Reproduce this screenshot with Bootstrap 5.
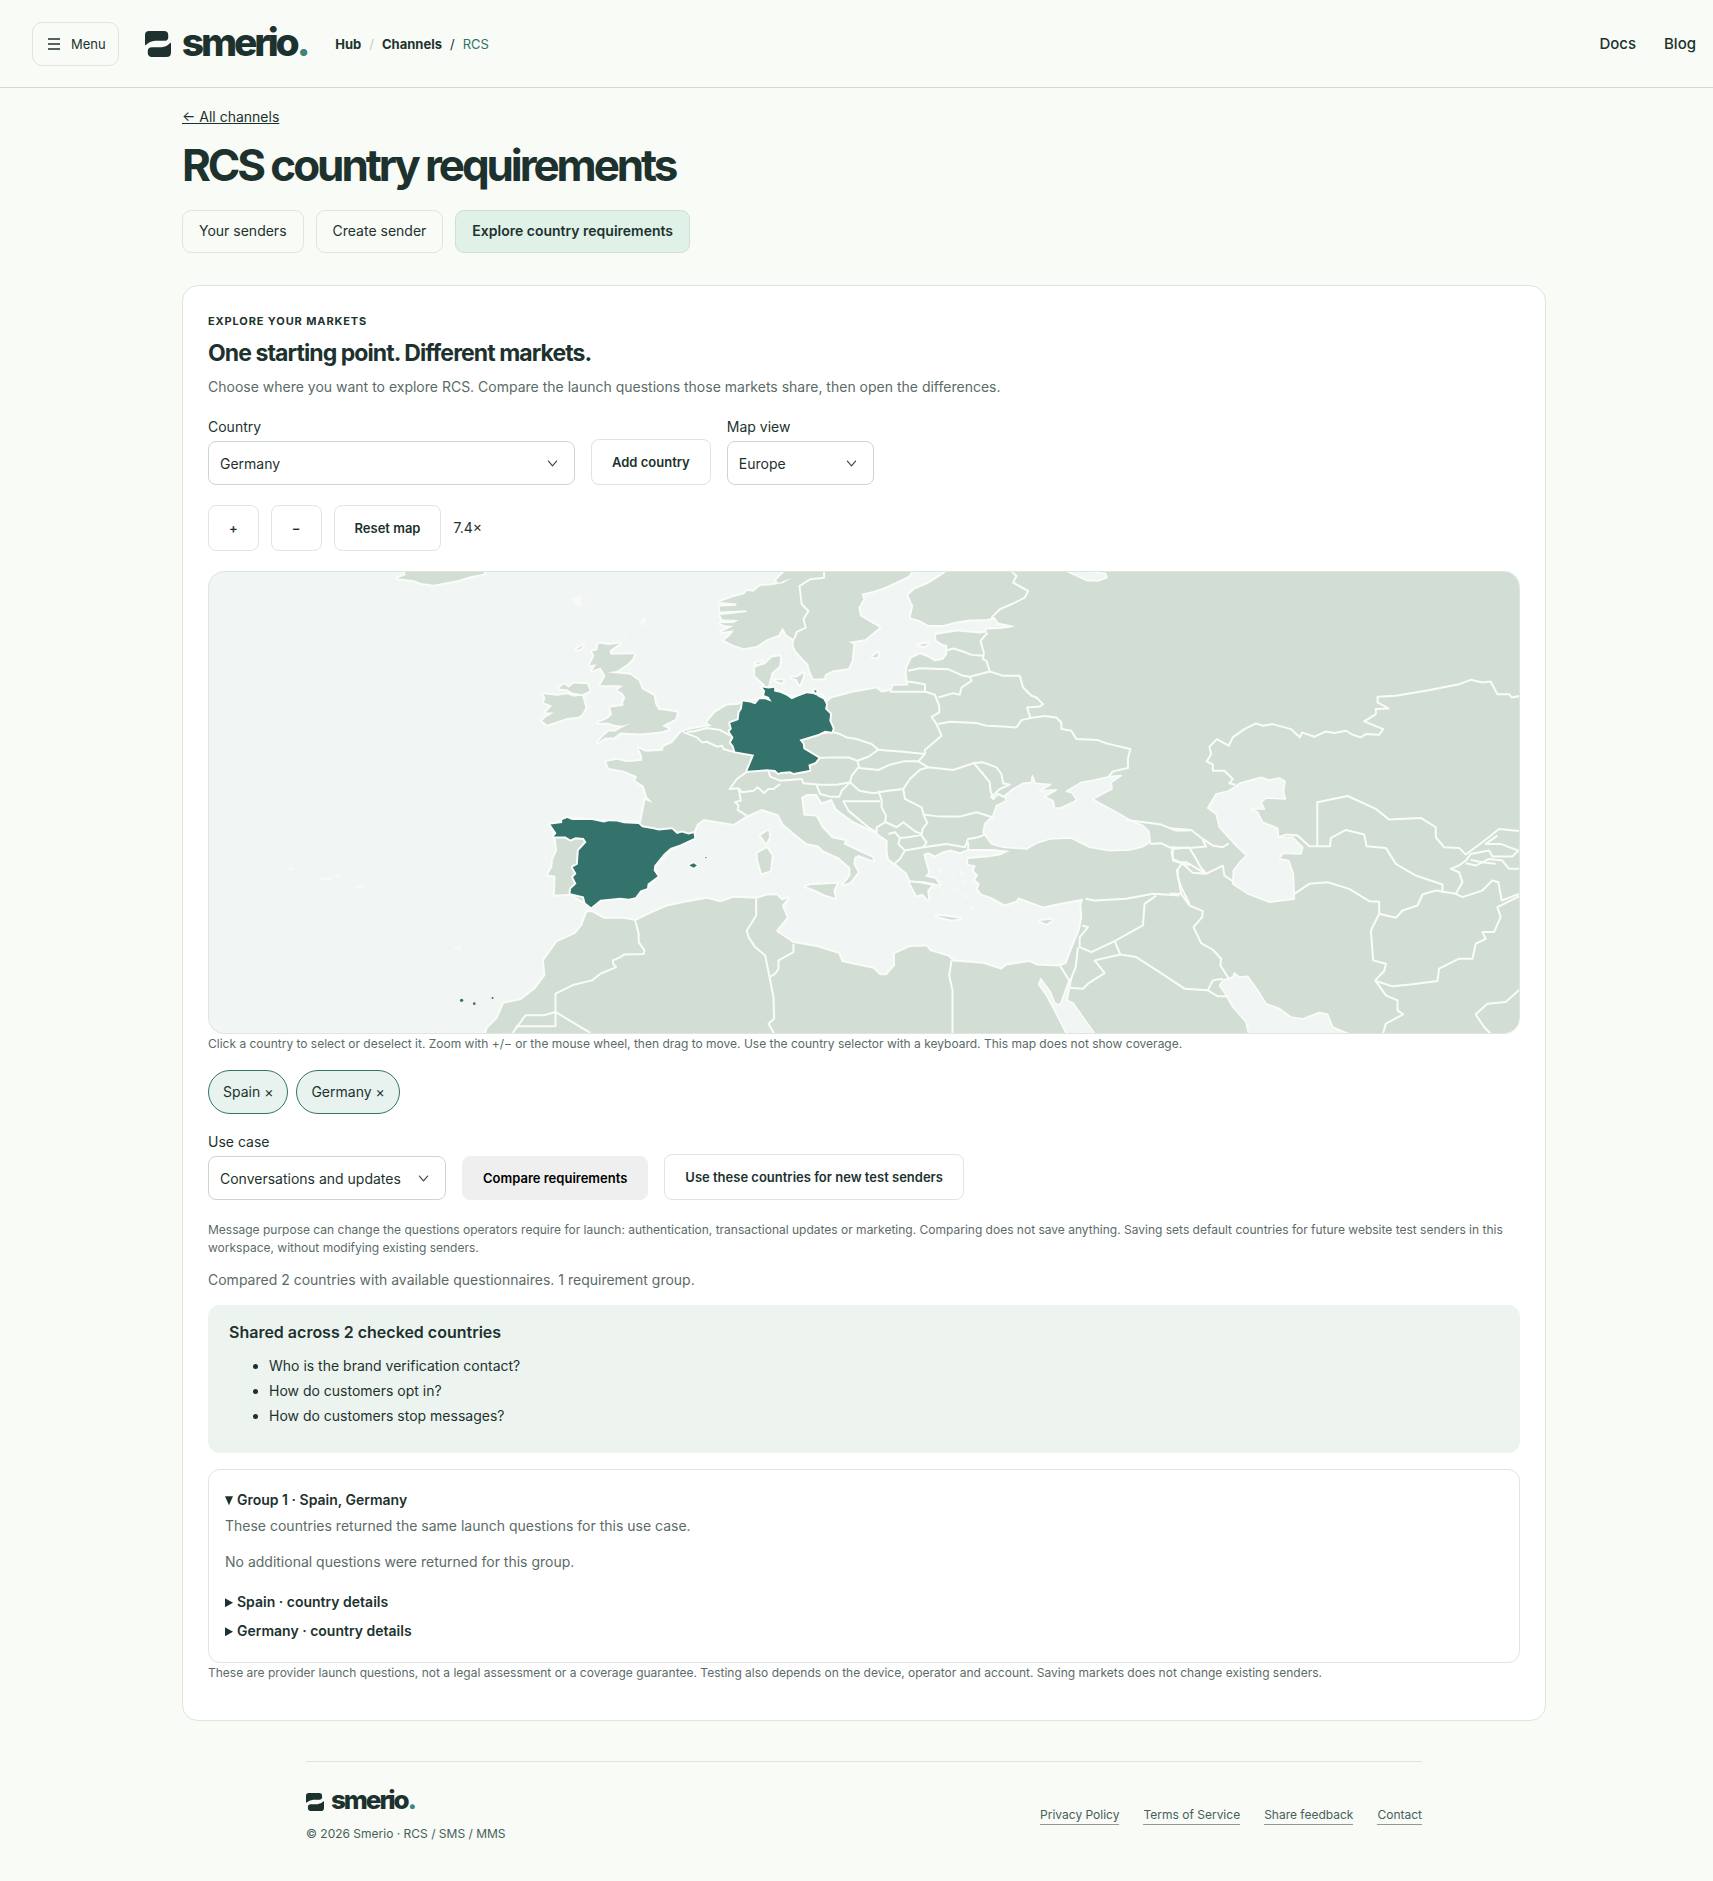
<!DOCTYPE html>
<html lang="en">
<head>
<meta charset="utf-8">
<meta name="viewport" content="width=device-width, initial-scale=1">
<title>RCS country requirements · Smerio</title>
<link href="https://cdn.jsdelivr.net/npm/bootstrap@5.3.0/dist/css/bootstrap.min.css" rel="stylesheet">
<style>
:root{--ink:#1d322e;--muted-ink:#5c6b67;--line:#dfe5df;--accent:#33736b;--paper:#f8fbf6}
body{font-family:Inter,"Liberation Sans",sans-serif;font-size:14px;line-height:20px;color:var(--ink);background:var(--paper)}
a{color:inherit}
.topbar{height:88px;border-bottom:1px solid #d3d9d3;padding:0 17px 0 32px}
.btn{font-size:14px;line-height:20px;color:var(--ink);border:1px solid var(--line);border-radius:8px}
.menu-btn{height:44px;padding:0 12px 0 15px;font-size:13px;border-radius:10px;gap:11px}
.brand{font-weight:800;letter-spacing:-.08em;text-decoration:none;line-height:1;color:var(--ink)}
.brand-lg{font-size:39px;gap:11px;margin-left:26px}
.brand-sm{font-size:26px;gap:7px}
.brand i{font-style:normal;color:#3f8478}
.crumbs{font-size:13px;gap:8px;margin-left:28px}
.crumbs a{font-weight:700;text-decoration:none}
.crumb-now{color:var(--accent)}
.top-links{gap:28px;font-size:15px;font-weight:500}
.gutter-start{padding-left:15px}
.page-col{max-width:1364px;margin:0 auto}
.back-link{margin-top:19px}
h1{font-size:44px;line-height:52px;font-weight:700;letter-spacing:-.07em;margin:12px 0 19px}
.tab-row{gap:12px}
.tab-btn{height:43px;padding:10px 16px;border-radius:9px}
.btn.tab-btn.active{background:#e0f1e8;color:var(--ink);border-color:#cddfd6;font-weight:600}
.panel{background:#fff;border:1px solid var(--line);border-radius:16px;padding:25px 25px 37px;margin-top:32px}
.eyebrow{font-size:11px;line-height:20px;font-weight:700;letter-spacing:.08em}
h2{font-size:23px;line-height:30px;font-weight:700;letter-spacing:-.04em;margin:7px 0 9px}
.intro{margin-bottom:19px}
.soft{color:var(--muted-ink)}
.fine{font-size:12px;line-height:20px;color:var(--muted-ink)}
.fine-wrap{line-height:18px;margin:21px 0 13px}
.form-select{height:44px;font-size:14px;color:var(--ink);border-color:#cbd6d0;border-radius:8px;padding:0 36px 0 11px;background-size:13px 13px;background-position:right 15px center;background-image:url("data:image/svg+xml,%3csvg xmlns='http://www.w3.org/2000/svg' viewBox='0 0 16 16'%3e%3cpath fill='none' stroke='%233d4f4b' stroke-width='1.5' stroke-linecap='round' stroke-linejoin='round' d='m3 5 5 6 5-6'/%3e%3c/svg%3e")}
.form-label{margin:0 0 3px;line-height:22px}
.sel-country{width:367px}.sel-view{width:147px}.sel-case{width:238px}
.act{height:46px;padding:0 20px;font-size:13px;font-weight:600;background:#fff}
.act-plain{height:44px;background:#efefef;border-color:#efefef;color:#000}
.zoom-row{gap:12px;margin:20px 0}
.world{display:block;width:100%;height:auto;border:1px solid var(--line);border-radius:16px;background:#f1f5f4}
.chip{height:44px;padding:0 14px;border-radius:22px;background:#e8f2ee;border-color:var(--accent)}
.case-row{margin-top:17px}
.status-line{margin-bottom:15px}
.shared{background:#edf4f0;border-radius:12px;padding:16px 21px 25px}
.shared ul{padding-left:40px}
h3{font-size:16px;line-height:22px;font-weight:600;margin:0 0 10px}
.shared li{line-height:25px}
.group-box{border:1px solid var(--line);border-radius:12px;padding:20px 16px 12px}
summary{font-weight:600;line-height:20px;list-style:none}
summary::before{content:"";display:inline-block;width:8px;height:9px;margin-right:4px;background:currentColor;clip-path:polygon(0 0,100% 50%,0 100%)}
.group-box[open]>summary::before{clip-path:polygon(0 0,100% 0,50% 100%)}
.group-text{margin:6px 0 16px}
.group-text+.nested{margin-top:20px}
.nested{padding:0 0 9px}
.foot{max-width:1116px;margin:40px auto 0;border-top:1px solid #dde3dd;padding:25px 0 37px;font-size:12px;line-height:18px;color:#47605a}
.foot-links{gap:24px}
.foot-links a{text-decoration:none;border-bottom:1px solid #8d9c96}
</style>
</head>
<body>
<svg class="d-none"><symbol id="mark-s" viewBox="0 0 75 75"><path d="M12 0H55Q67 0 67 12V19Q67 28 58 28H30Q13 29 2 41Q0 41 0 38V12Q0 0 12 0Z"/><path d="M75 35V62Q75 75 62 75H20Q8 75 8 63V58Q8 47 20 47H48Q63 46 73 34Z"/></symbol></svg>
<header class="topbar d-flex align-items-center justify-content-between">
  <div class="d-flex align-items-center">
    <button type="button" class="btn menu-btn d-flex align-items-center"><svg width="12" height="12" viewBox="0 0 12 12" stroke="currentColor" stroke-width="1.4" aria-hidden="true"><path d="M0 1H12M0 6H12M0 11H12"/></svg>Menu</button>
    <a href="#" class="brand brand-lg d-flex align-items-center"><svg width="26" height="26" fill="currentColor" aria-hidden="true"><use href="#mark-s"/></svg><span class="pb-1">smerio<i>.</i></span></a>
    <nav class="crumbs d-flex align-items-center" aria-label="Breadcrumb"><a href="#">Hub</a><span class="opacity-25">/</span><a href="#">Channels</a><span>/</span><span class="crumb-now">RCS</span></nav>
  </div>
  <nav class="top-links d-flex"><a class="text-decoration-none" href="#">Docs</a><a class="text-decoration-none" href="#">Blog</a></nav>
</header>

<div class="gutter-start">
<main class="page-col">
  <a href="#" class="back-link d-inline-block">← All channels</a>
  <h1>RCS country requirements</h1>
  <nav class="tab-row d-flex flex-wrap"><a href="#" class="btn tab-btn">Your senders</a><a href="#" class="btn tab-btn">Create sender</a><a href="#" class="btn tab-btn active" aria-current="page">Explore country requirements</a></nav>

  <section class="panel">
    <div class="eyebrow">EXPLORE YOUR MARKETS</div>
    <h2>One starting point. Different markets.</h2>
    <p class="soft intro">Choose where you want to explore RCS. Compare the launch questions those markets share, then open the differences.</p>
    <div class="d-flex flex-wrap align-items-end gap-3">
      <div><label class="form-label d-block" for="country">Country</label><select id="country" class="form-select sel-country"><option>Germany</option><option>Spain</option></select></div>
      <button type="button" class="btn act">Add country</button>
      <div><label class="form-label d-block" for="view">Map view</label><select id="view" class="form-select sel-view"><option>Europe</option><option>World</option></select></div>
    </div>
    <div class="zoom-row d-flex align-items-center"><button type="button" class="btn act">+</button><button type="button" class="btn act">−</button><button type="button" class="btn act">Reset map</button><span>7.4×</span></div>

    <svg class="world" viewBox="-936 33 3936 1386" role="img" aria-label="Map of Europe with Spain and Germany selected">
      <g fill="#d2ddd4" stroke="#fafcf9" stroke-width="12" stroke-linejoin="round" paint-order="stroke">
        <!-- Scandinavia -->
        <path d="M800 25L768 58L775 66L815 50L790 66L755 73L720 75L700 92L680 90L672 100L640 108L598 123L650 128L645 135L598 137L600 152L680 148L678 154L600 162L606 176L655 177L640 186L600 187L612 193L640 195L602 214L641 208L630 224L612 238L640 252L670 262L710 255L740 235L775 222L787 200L800 222L822 235L820 255L828 270L845 290L865 310L868 325L880 354L912 352L915 340L940 328L985 322L995 300L1000 250L985 243L1035 235L1078 200L1050 183L1020 165L1015 140L1030 115L1025 98L1060 90L1090 80L1130 62L1165 45L1180 25Z"/>
        <!-- Eurasia and Africa -->
        <path d="M1290 25L1262 45L1225 68L1185 85L1165 103L1180 135L1172 170L1200 178L1225 192L1270 192L1310 182L1350 176L1400 175L1425 168L1435 185L1485 195L1475 200L1440 204L1400 206L1400 215L1380 218L1315 212L1270 218L1248 222L1250 238L1270 250L1282 252L1282 280L1270 297L1245 302L1225 290L1200 280L1175 292L1162 320L1160 340L1166 374L1120 375L1115 390L1085 395L1068 383L1000 395L935 412L918 428L905 405L870 397L820 412L760 385L735 380L734 372L705 345L705 320L735 310L755 290L780 286L778 315L755 335L745 372L740 420L700 420L668 424L655 432L620 434L585 455L560 485L575 495L500 508L480 517L470 530L455 547L430 558L428 570L375 573L355 563L365 585L365 600L335 603L315 603L290 597L258 603L265 622L310 630L350 647L345 660L370 675L380 708L397 727L375 718L362 785L270 784L140 774L95 795L105 830L110 870L98 895L95 920L82 943L105 946L103 1003L150 1000L210 1035L250 1012L340 1010L380 980L408 945L400 920L450 865L520 832L520 815L530 790L550 775L640 790L680 765L725 745L775 762L790 790L830 825L860 848L895 855L910 870L955 890L990 920L992 945L970 972L990 965L1013 935L1000 910L1003 890L1015 883L1060 900L1055 890L1015 872L970 850L975 841L935 832L905 800L888 768L850 765L843 710L860 700L890 700L905 725L935 715L950 745L1000 782L1060 810L1103 840L1103 875L1107 895L1130 912L1160 937L1172 962L1212 962L1258 972L1245 955L1215 948L1225 935L1215 900L1210 880L1225 875L1245 885L1270 872L1292 867L1320 875L1345 865L1380 865L1420 865L1470 871L1440 885L1405 890L1345 895L1345 910L1368 915L1362 930L1375 945L1366 958L1380 970L1374 985L1385 1000L1415 1010L1455 1032L1490 1020L1495 1010L1570 1038L1630 1025L1690 1015L1685 1035L1688 1070L1680 1110L1655 1170L1640 1210L1620 1218L1550 1215L1530 1205L1460 1215L1445 1228L1390 1210L1300 1203L1285 1188L1230 1172L1220 1158L1170 1160L1125 1180L1125 1215L1100 1245L1080 1245L1060 1225L965 1205L955 1180L890 1160L820 1148L770 1115L768 1110L800 1070L785 1035L802 1013L785 1020L770 1004L740 1005L710 1015L640 1012L600 1025L560 1015L500 1025L440 1038L400 1055L345 1082L310 1075L250 1075L215 1055L200 1055L185 1095L165 1120L110 1145L70 1200L75 1245L45 1285L0 1320L-50 1330L-70 1375L-100 1405L-110 1450H3050V25Z"/>
        <path d="M1170 965L1190 1005L1208 1000L1225 1018L1222 990L1235 975L1200 968Z"/>
        <!-- British Isles -->
        <path d="M235 248L265 252L298 248L280 260L268 268L270 282L342 280L335 295L320 310L290 330L262 335L330 342L355 360L365 385L400 405L405 430L415 448L440 450L470 455L465 475L425 495L445 505L425 512L360 518L300 515L280 530L255 530L232 545L250 525L265 512L285 512L305 500L330 488L305 495L280 492L262 485L232 487L260 475L275 462L270 440L310 435L308 425L315 410L305 395L290 388L308 375L290 373L240 373L255 345L240 320L215 330L228 310L208 313L222 285L215 272L230 268Z"/>
        <path d="M68 400L110 405L140 400L160 408L185 404L195 440L185 460L175 468L140 472L100 485L80 492L65 480L75 470L100 455L75 455L95 435L70 425L75 412Z"/>
        <path d="M115 383L130 370L145 380L160 368L200 370L208 390L185 400L155 395L140 385Z"/>
        <path d="M-350 25L-345 42L-370 52L-320 58L-300 66L-260 71L-190 58L-150 46L-110 38V25Z"/>
        <!-- islands -->
        <path d="M858 978L870 974L950 970L940 990L945 1012L915 1003L885 988Z"/><path d="M712 878L740 863L755 885L750 930L725 938L714 900Z"/><path d="M722 825L745 810L747 830L738 847Z"/>
        <path d="M765 358L790 358L785 366Z"/><path d="M812 350L830 350L850 337L848 350L838 372L830 355Z"/><path d="M705 308L725 302L715 309Z"/><path d="M1058 288L1075 275L1072 290Z"/><path d="M1195 252L1225 248L1215 255Z"/><path d="M168 266L188 252L180 264Z"/>
        <path d="M1250 1066L1275 1068L1320 1074L1295 1078L1270 1072Z"/><path d="M1560 1082L1598 1078L1580 1090Z"/>
      </g>
      <!-- inland seas and gulfs -->
      <g fill="#f1f5f4" stroke="#fafcf9" stroke-width="5" stroke-linejoin="round">
        <path transform="translate(1020 660)" d="M370 155L375 130L400 105L410 75L440 60L435 45L460 25L490 8L515 5L518-15L527 8L572 12L540 30L590 28L555 48L580 60L585 82L602 82L640 65L652 58L635 35L620 32L665 5L705-2L750-12L785-15L755 5L757 25L728 40L700 55L715 65L780 100L810 118L850 135L868 152L872 185L850 198L810 208L750 210L690 200L660 185L635 172L570 175L530 188L500 205L430 200L395 190Z"/>
        <path transform="translate(1950 0)" d="M195 680L210 668L275 650L300 658L330 652L347 662L342 692L348 715L290 712L275 725L285 745L245 745L265 755L280 785L325 803L328 830L370 830L385 845L400 860L395 880L340 878L330 895L358 900L372 940L375 1015L300 1025L235 1000L190 970L192 930L215 900L232 885L200 855L150 800L140 760L115 742L140 700L175 692Z"/>
        <path transform="translate(1950 0)" d="M160 1260L190 1250L195 1238L210 1250L235 1248L265 1290L290 1330L330 1345L365 1370L400 1376L450 1357L475 1362L490 1400L560 1430H240L230 1385L190 1340L170 1305L150 1275Z"/>
        <path transform="translate(1020 660)" d="M543 595L537 612L560 645L582 685L625 770H712L640 668L622 660L634 600L628 600L606 662L600 674L585 668L572 635Z"/>
        <path d="M1640 30L1700 58L1735 60L1762 50L1758 38L1700 30Z"/>
      </g>
      <!-- borders -->
      <g fill="none" stroke="#fafcf9" stroke-width="6" stroke-linejoin="round">
        <path d="M912 30V50L870 55L838 75L845 130L865 150L850 175L857 200L830 213L822 235M1475 30L1490 45L1480 65L1525 90L1515 110L1475 130L1440 145L1415 170M1403 215L1382 240L1392 275L1390 295L1400 300L1410 332L1450 345L1500 345L1510 380L1535 405L1550 410L1570 430L1560 437L1522 440L1532 472M1282 268L1300 263L1330 272L1355 282L1390 285M1165 330L1200 322L1285 325L1330 345L1350 348L1410 332M1350 348L1355 360L1325 380L1320 402L1300 397L1255 410M1165 362L1215 370L1215 390M1110 393L1215 392L1245 402L1258 435L1258 455L1235 468L1250 490L1265 525L1215 568L1215 580L1195 602M1255 490L1290 483L1370 487L1400 495L1450 497L1490 500L1505 478L1532 472L1575 466L1610 470L1625 485V505L1655 510L1670 535L1735 538L1760 548L1832 565L1825 595L1825 622L1780 632L1765 650"/>
        <path d="M895 520L935 513L960 520L980 530L1010 535L1055 550L1075 567L1110 570L1150 573L1215 580M895 592L930 590L985 590L1012 600L1045 588L1075 567M1012 600L1018 622L1075 628L1110 612L1150 602L1195 602L1225 620M1015 620L995 645L990 665L950 672L900 672L850 668L845 655L780 660L750 648L745 630M682 632L650 655L628 685L655 683L665 695L700 690L712 680L732 697L745 685L760 685L780 670M655 683L662 720L645 725L655 735L652 748L680 765M1018 690L990 665M1018 690L1060 698L1105 690L1150 685L1170 655L1200 627L1225 620L1300 628L1362 607L1390 640L1410 665L1412 690L1420 715L1435 700L1460 712M1362 607L1390 605L1430 620L1445 640L1450 668L1470 672L1440 685L1412 712M890 675L900 700L930 708L958 708L965 690L990 665M1080 722L970 722L985 750L1045 800L1070 815L1070 800L1095 785L1098 765L1085 740L1085 718L1075 690M1150 685L1155 715L1205 740L1212 765L1222 787L1208 805L1205 825L1220 845L1210 860L1155 870L1135 850L1140 832L1125 815L1105 820M1098 785L1130 800L1150 785L1185 812L1208 822M1140 832L1165 830L1208 822M1155 870L1140 895L1125 908M1210 860L1280 850L1335 860L1345 835L1375 830L1395 822M1345 845V870M1212 762L1260 768L1320 768L1370 755L1425 772M490 515L530 530L545 545L560 543L590 558L605 555L610 565L645 575M500 512L520 512L560 502L600 508L630 525"/>
        <path d="M345 1082L355 1120V1145L372 1170L370 1181L312 1182L300 1190L278 1200V1210L287 1220L240 1240L215 1260L160 1273L105 1300V1398H-15M210 1418L105 1355L70 1365L15 1365L-25 1420M708 1015V1065L680 1110L685 1130L705 1160L735 1185L748 1250L760 1310L762 1375L745 1390L765 1425M820 1150V1175L775 1200V1225L765 1240L748 1250M1295 1200L1288 1245L1298 1290V1425"/>
        <path transform="translate(1020 660)" d="M872 190L905 188L940 205L990 200M940 205L940 240L990 255M955 265L955 290L965 320L990 370M678 355L705 360L800 355L880 340L960 345M890 345L855 370L850 435L765 482L695 515L660 500L660 470L685 440L668 435M765 482L782 522L705 540L735 578L685 610L670 625L632 622M655 500L648 560L630 605M602 558L632 605M782 522L830 530L900 575L975 625M800 118L835 123L905 132L950 150H990"/>
        <path transform="translate(1950 0)" d="M45 1285L115 1290L130 1260L160 1255M115 1290L145 1308H175M0 803L65 808L100 835L130 855L160 860L178 848M5 860L60 862L110 858L100 840M60 862L80 895L90 915L110 940L50 905L35 905L70 937L110 940L160 915L165 945L190 962M5 870L10 895L38 908L22 930L35 1000L60 1035L100 1052L98 1070L72 1100L95 1148L130 1168L155 1195L153 1215L178 1255M0 1000H35"/>
        <path transform="translate(1950 0)" d="M198 672L180 668L190 655L165 630H130L130 612L112 602L125 580L120 558L142 535L178 555L190 530L225 505L260 488L280 495L310 490L365 505L392 530L398 515L435 528L470 512L495 517L530 510L550 522L575 530L590 520L630 522L642 505L585 482L620 460V445L658 443L625 425V408L680 405L770 390L870 370L905 357L940 365L965 362L985 400L1020 400L1028 410L1055 405"/>
        <path transform="translate(1950 0)" d="M444 856V725L535 706L620 745L660 777L755 772L800 800V830L825 860L870 862L890 882L940 845L990 805L1055 812M328 830L350 822L385 825L420 857H482L485 832L530 808L585 822L592 857L650 862L680 910L740 945L820 972V998M375 1000L420 970L475 965L540 985L600 1022L630 1024V1060L680 1072L700 1050L745 1035L760 1002L800 990L860 1000L880 965L870 935L845 925L870 915L890 900L905 880L960 870L970 888L1030 888L1048 870L995 850L950 850L985 825M890 908L920 915L960 895L1000 900L1020 925H1055M905 898L940 905L980 910M860 1000L880 1010L940 990L970 960L988 965L998 1020L1050 1000M1055 1005L985 1040L995 1070L975 1115H940L950 1135L920 1150L910 1195L870 1195L810 1225L805 1262L730 1272L670 1278L620 1262M630 1060L605 1110L612 1200L650 1210L645 1232L618 1260L650 1305L685 1320V1350L702 1362L650 1390L640 1425M1055 1285L1010 1325L955 1330L920 1362L945 1400L970 1425"/>
      </g>
      <!-- selected countries -->
      <g fill="#33736b" stroke="#fafcf9" stroke-width="12" stroke-linejoin="round" paint-order="stroke">
        <path d="M90 792L125 787L125 778L140 772L155 778H215L250 786L265 782L290 783L310 788L355 790L365 800L400 806L415 810L455 806L470 820L485 816L505 822L520 818L522 832L480 852L450 862L430 880L402 915L400 930L412 947L382 970L380 983L360 990L345 1010L325 1015L300 1012L240 1018L212 1040L195 1027L190 1008L150 998L152 985L168 970L158 950L168 940L157 920L172 912L175 870L198 845L190 832L165 830L150 837L135 828L100 828L108 818Z"/>
        <path d="M727 380L745 383L762 381V392L780 396L800 405L815 415L832 408L860 397L885 400L895 408L910 415L918 430L915 445L930 460L928 480L938 503L935 513L915 510L895 520L838 537L848 550L850 565L895 592L885 605L865 612L868 628L820 637L810 632L782 634L775 637L765 628L740 626L715 628L682 630L702 582L645 572L640 555L632 545L640 530L628 512L635 505L630 487L655 478L658 455L665 445L668 422L690 425L705 430L718 415L735 415L755 423L745 408L732 403L735 390Z"/>
        <path d="M507 914L520 908L530 915L520 922Z"/><path d="M882 388L890 390L886 396Z"/>
      </g>
      <g fill="#33736b"><circle cx="-177" cy="1320" r="5"/><circle cx="-139" cy="1330" r="4"/><circle cx="-84" cy="1313" r="3"/><circle cx="557" cy="891" r="2"/></g>
      <!-- small islands -->
      <g fill="#f7faf7"><ellipse cx="-690" cy="925" rx="7" ry="4"/><ellipse cx="-585" cy="955" rx="20" ry="5"/><ellipse cx="-548" cy="946" rx="10" ry="5"/><ellipse cx="-485" cy="980" rx="14" ry="4"/><ellipse cx="-188" cy="1162" rx="13" ry="5"/><path d="M150 112L185 105L180 138L165 132ZM358 190L365 172L382 170L370 195ZM300 240L320 220L312 235Z"/><path d="M1255 925l14 6-6 8zM1290 945l16 4-8 8zM1320 930l14 8-10 6zM1300 980l12 6-10 6zM1330 1000l16 6-8 8zM1345 1045l14-12 2 14zM1262 990l10 4-6 8zM1325 960l18 2-6 8z"/></g>
    </svg>
    <p class="fine mb-3">Click a country to select or deselect it. Zoom with +/− or the mouse wheel, then drag to move. Use the country selector with a keyboard. This map does not show coverage.</p>
    <div class="d-flex gap-2"><button type="button" class="btn chip">Spain ×</button><button type="button" class="btn chip">Germany ×</button></div>
    <div class="case-row d-flex flex-wrap align-items-end gap-3">
      <div><label class="form-label d-block" for="usecase">Use case</label><select id="usecase" class="form-select sel-case"><option>Conversations and updates</option><option>Authentication</option><option>Marketing</option></select></div>
      <button type="button" class="btn act act-plain">Compare requirements</button>
      <button type="button" class="btn act">Use these countries for new test senders</button>
    </div>
    <p class="fine fine-wrap">Message purpose can change the questions operators require for launch: authentication, transactional updates or marketing. Comparing does not save anything. Saving sets default countries for future website test senders in this workspace, without modifying existing senders.</p>
    <p class="soft status-line" role="status">Compared 2 countries with available questionnaires. 1 requirement group.</p>
    <div class="shared mb-3"><h3>Shared across 2 checked countries</h3><ul class="mb-0"><li>Who is the brand verification contact?</li><li>How do customers opt in?</li><li>How do customers stop messages?</li></ul></div>
    <details class="group-box" open>
      <summary>Group 1 · Spain, Germany</summary>
      <p class="soft group-text">These countries returned the same launch questions for this use case.</p>
      <p class="soft group-text">No additional questions were returned for this group.</p>
      <details class="nested"><summary>Spain · country details</summary></details>
      <details class="nested"><summary>Germany · country details</summary></details>
    </details>
    <p class="fine mb-0">These are provider launch questions, not a legal assessment or a coverage guarantee. Testing also depends on the device, operator and account. Saving markets does not change existing senders.</p>
  </section>
</main>

<footer class="foot d-flex justify-content-between align-items-center">
  <div><a href="#" class="brand brand-sm d-flex align-items-center"><svg width="18" height="18" fill="currentColor" aria-hidden="true"><use href="#mark-s"/></svg><span class="pb-1">smerio<i>.</i></span></a><div class="mt-2">© 2026 Smerio · RCS / SMS / MMS</div></div>
  <nav class="foot-links d-flex"><a href="#">Privacy Policy</a><a href="#">Terms of Service</a><a href="#">Share feedback</a><a href="#">Contact</a></nav>
</footer>
</div>
<script src="https://cdn.jsdelivr.net/npm/bootstrap@5.3.0/dist/js/bootstrap.bundle.min.js"></script>
</body>
</html>
